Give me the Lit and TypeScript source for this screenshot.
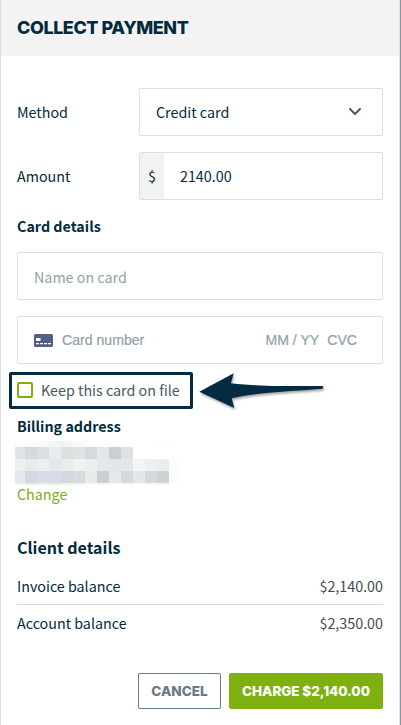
import { LitElement, html, css, svg } from "lit";
import { customElement } from "lit/decorators.js";

// Redacted address block: rows of [height, cell colours], each cell 12px wide (first 10px).
const MOSAIC: [number, string[]][] = [
  [6, ["#fdfdfd", "#fcfcfc", "#fbfbfb", "#f3f4f4", "#f3f4f4", "#f9f9f9", "#fdfdfd", "#fdfdfd", "#fdfdfd", "#fdfdfd", "#fff", "#fff", "#fdfdfd", "#fff"]],
  [12, ["#e1e4e7", "#d3d9df", "#dadfe2", "#e8ecec", "#dce0e1", "#dfe3e4", "#d4dbdc", "#e3e7e9", "#c9cfd3", "#dfe2e5", "#fff", "#fff", "#fff", "#fff"]],
  [12, ["#eceef0", "#e8eaec", "#ebedee", "#e4e8ea", "#e9ebec", "#f1f2f3", "#eceeef", "#e5e8ea", "#e3e7e9", "#e3e7e9", "#f4f5f5", "#efeff0", "#ebecee", "#fdfdfd"]],
  [12, ["#e4e7eb", "#d3d8e3", "#d9dce7", "#d9dce7", "#d3d7e2", "#d6dbde", "#e8ebec", "#c9d0d3", "#e5e8ea", "#d4dadd", "#e3e7e9", "#d4dadc", "#cbd1d5", "#fcfcfc"]],
  [2, ["#f1f3ec", "#eaefdf", "#f1f3ec", "#e8eddc", "#eff2e9", "#f2f4f0", "#f9f9f9", "#f5f5f6", "#f9f9f9", "#f7f7f7", "#f9f9f9", "#f7f7f7", "#f5f5f5", "#fff"]],
];

@customElement("app-root")
export class AppRoot extends LitElement {
  static styles = css`
    :host {
      display: block;
      width: 401px;
      height: 725px;
      overflow: hidden;
      background: #fff;
      color: #032b3c;
      font: 14.3px/24px "Noto Sans CJK SC", "Noto Sans", sans-serif;
    }
    * { box-sizing: border-box; }
    .panel {
      position: relative;
      height: 725px;
      border-left: 1px solid #dcdee0;
      border-right: 1px solid #8798a6;
      box-shadow: inset -1px 0 #dfe3e6;
    }
    .head {
      height: 56px;
      background: #f3f3f3;
      padding: 0 16px;
      display: flex;
      align-items: center;
      margin-right: 1px;
    }
    .title { margin: 0; font: 800 18px/24px Inter, sans-serif; letter-spacing: -0.45px; white-space: nowrap; }
    .body { padding: 32px 17px 0 16px; }
    .row { display: flex; align-items: center; justify-content: space-between; height: 48px; margin-bottom: 16px; }
    .field {
      height: 48px;
      border: 1px solid #dcdedf;
      border-radius: 2px;
      display: flex;
      align-items: center;
      padding: 0 16px;
      background: #fff;
    }
    .narrow { width: 244px; }
    .select { justify-content: space-between; padding-right: 20px; }
    .money { padding-left: 0; }
    .unit { width: 24px; height: 46px; line-height: 46px; text-align: center; background: #f2f2f2; margin-right: 16px; }
    .h { margin: 0; font-size: 14.3px; font-weight: 700; line-height: 24px; }
    .cardhead { margin-top: -2px; margin-bottom: 14px; }
    .name { color: #93a0a8; margin-bottom: 16px; padding-top: 2px; }
    .card { font: 14.1px/24px "Liberation Sans", Arial, sans-serif; color: #93a0a8; padding-right: 25px; -webkit-text-stroke: 0.2px #93a0a8; }
    .num { margin-left: 9px; flex: 1; }
    .exp { margin-right: 8px; }
    .keep {
      display: flex;
      align-items: center;
      width: 184px;
      height: 37px;
      margin: 8px 0 5px -8px;
      border: 3px solid #042b41;
      border-radius: 2px;
      padding-left: 5px;
      padding-bottom: 1px;
      color: #485761;
    }
    .box { width: 16px; height: 16px; border: 2px solid #80b010; border-radius: 2px; margin-right: 8px; }
    .arrow { position: absolute; left: 195px; top: 369px; filter: drop-shadow(1px 2px 1px rgba(0, 0, 0, 0.35)); }
    .mosaic { margin: 3px 0 -3px -2px; width: 168px; height: 44px; display: block; }
    .link { color: #7bad0c; }
    .client { font-size: 16px; margin: 29px 0 15px; }
    .line { display: flex; justify-content: space-between; height: 30px; line-height: 24px; }
    .line + .line { border-top: 1px solid #d9dcde; padding-top: 6px; }
    .value { color: #3f4b52; }
    .actions { display: flex; justify-content: flex-end; gap: 8px; margin-top: 39px; }
    .btn {
      height: 36px;
      border: 1px solid #667b88;
      border-radius: 2px;
      background: #fff;
      color: #667b88;
      padding: 0;
      width: 83px;
      font: 800 13.5px/34px Inter, sans-serif;
      white-space: nowrap;
    }
    .primary { width: 154px; background: #7eb00f; border-color: #7eb00f; color: #fff; letter-spacing: -0.08px; }
  `;

  private mosaic() {
    let y = 0;
    return MOSAIC.map(([h, cells]) => {
      const top = y;
      y += h;
      return cells.map((c, i) => svg`<rect x=${i ? i * 12 - 2 : 0} y=${top} width=${i ? 12 : 10} height=${h} fill=${c} />`);
    });
  }

  render() {
    return html`
      <div class="panel">
        <header class="head"><h1 class="title">COLLECT PAYMENT</h1></header>
        <main class="body">
          <div class="row">
            <span class="label">Method</span>
            <div class="field narrow select">
              <span>Credit card</span>
              <svg width="14" height="10" viewBox="0 0 14 10" fill="none" stroke="#4c5a62" stroke-width="2" stroke-linecap="round" stroke-linejoin="round">
                <path d="M2 2 L7 7 L12 2" />
              </svg>
            </div>
          </div>
          <div class="row">
            <span class="label">Amount</span>
            <div class="field narrow money"><span class="unit">$</span><span>2140.00</span></div>
          </div>
          <h2 class="h cardhead">Card details</h2>
          <div class="field name">Name on card</div>
          <div class="field card">
            <svg width="19" height="13" viewBox="0 0 19 13">
              <rect width="19" height="13" rx="1.5" fill="#525f82" />
              <path d="M2 4h4.5v3H2zM2 9h3v1.2H2zM6 9h3v1.2H6zM10 9h3v1.2h-3zM14 9h3v1.2h-3z" fill="#fff" />
            </svg>
            <span class="num">Card number</span><span class="exp">MM / YY</span><span>CVC</span>
          </div>
          <div class="keep"><span class="box"></span><span>Keep this card on file</span></div>
          <h2 class="h">Billing address</h2>
          <svg class="mosaic" width="168" height="44" shape-rendering="crispEdges">${this.mosaic()}</svg>
          <div class="link">Change</div>
          <h2 class="h client">Client details</h2>
          <div class="line"><span>Invoice balance</span><span class="value">$2,140.00</span></div>
          <div class="line"><span>Account balance</span><span class="value">$2,350.00</span></div>
          <div class="actions">
            <button class="btn">CANCEL</button>
            <button class="btn primary">CHARGE $2,140.00</button>
          </div>
        </main>
        <svg class="arrow" width="132" height="44" viewBox="196 369 132 44">
          <path fill="#042b41" d="M199.3 391.7 L233.7 373.3 L230.9 383.3 C255 386.5 290 386 322.5 386 Q324.2 387.3 322.5 388.8 C290 391.5 255 392.5 231.7 398.3 L234.3 408 Z" />
        </svg>
      </div>
    `;
  }
}
